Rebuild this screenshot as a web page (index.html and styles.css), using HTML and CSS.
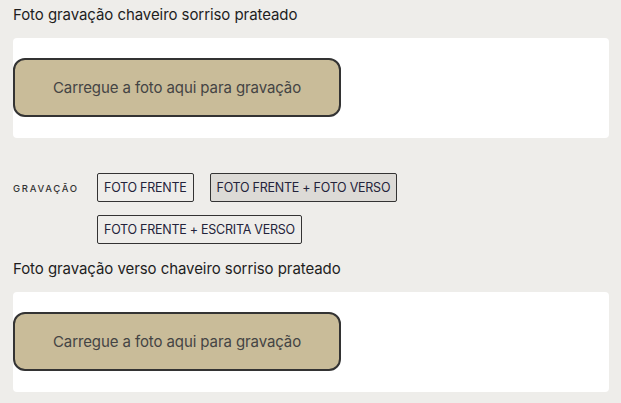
FILE: index.html
```html
<!DOCTYPE html>
<html lang="pt">
<head>
<meta charset="utf-8">
<link rel="stylesheet" href="styles.css">
</head>
<body>
<div class="page">
  <section class="field">
    <div class="field-title">Foto gravação chaveiro sorriso prateado</div>
    <div class="card">
      <button class="upload">Carregue a foto aqui para gravação</button>
    </div>
  </section>

  <div class="options">
    <div class="opt-label">GRAVAÇÃO</div>
    <div class="opt-list">
      <span class="opt">FOTO FRENTE</span>
      <span class="opt selected">FOTO FRENTE + FOTO VERSO</span>
      <span class="opt">FOTO FRENTE + ESCRITA VERSO</span>
    </div>
  </div>

  <section class="field">
    <div class="field-title">Foto gravação verso chaveiro sorriso prateado</div>
    <div class="card">
      <button class="upload">Carregue a foto aqui para gravação</button>
    </div>
  </section>
</div>
</body>
</html>
```
FILE: styles.css
```css
* { box-sizing: border-box; }
html, body { margin: 0; padding: 0; }
body {
  background: #eeedea;
  font-family: Inter, "Noto Sans", sans-serif;
  color: #1f1f1f;
  width: 621px;
  height: 403px;
  overflow: hidden;
}
.page {
  padding: 5px 13px 0 13px;
}
.field-title {
  font-size: 15px;
  line-height: 20px;
  letter-spacing: -0.07px;
  color: #1e1e1e;
}
.card {
  margin-top: 13px;
  background: #fff;
  border-radius: 4px;
  width: 596px;
  height: 100px;
  padding-top: 20px;
}
.upload {
  display: flex;
  align-items: center;
  justify-content: center;
  width: 328px;
  height: 59px;
  background: #c9bc99;
  border: 2px solid #333;
  border-radius: 12px;
  font-family: inherit;
  font-size: 15px;
  letter-spacing: -0.1px;
  color: #444;
  padding: 0;
}
.options {
  display: flex;
  align-items: flex-start;
  margin-top: 35px;
}
.opt-label {
  width: 84px;
  font-size: 9.5px;
  font-weight: 500;
  letter-spacing: 1.7px;
  color: #333;
  padding-top: 10px;
}
.opt-list {
  display: flex;
  flex-wrap: wrap;
  gap: 13px 16px;
  width: 320px;
}
.opt {
  display: inline-flex;
  align-items: center;
  height: 29px;
  padding: 0 6px;
  border: 1px solid #333;
  border-radius: 2px;
  font-size: 12.5px;
  letter-spacing: -0.25px;
  color: #23233a;
}
.opt.selected {
  background: #dcdad6;
}
.options + .field {
  margin-top: 15px;
}
```
